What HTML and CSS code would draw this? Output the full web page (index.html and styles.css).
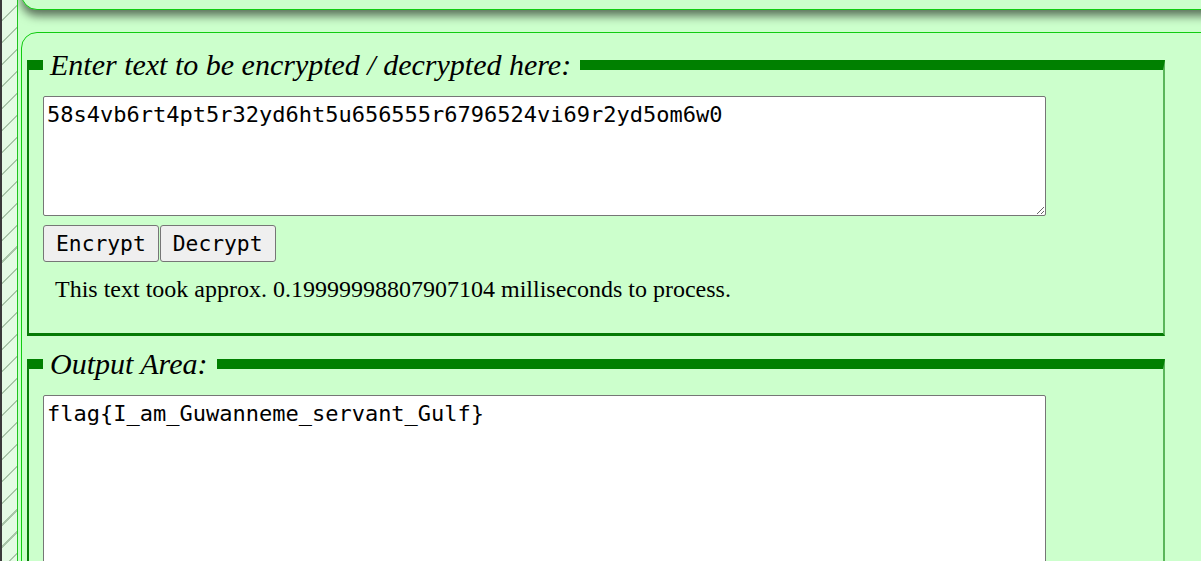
FILE: index.html
```html
<!DOCTYPE html>
<html>
<head>
<meta charset="utf-8">
<link rel="stylesheet" href="styles.css">
</head>
<body>
<div class="sidebar"></div>
<div class="main">
  <div class="topbox"></div>
  <div class="panel">
    <fieldset class="group">
      <legend class="group-title">Enter text to be encrypted / decrypted here:</legend>
      <textarea class="text-in">58s4vb6rt4pt5r32yd6ht5u656555r6796524vi69r2yd5om6w0</textarea>
      <div class="buttons">
        <button class="btn">Encrypt</button><button class="btn">Decrypt</button>
      </div>
      <p class="timing">This text took approx. 0.19999998807907104 milliseconds to process.</p>
    </fieldset>
    <fieldset class="group">
      <legend class="group-title">Output Area:</legend>
      <textarea class="text-out">flag{I_am_Guwanneme_servant_Gulf}</textarea>
    </fieldset>
  </div>
</div>
</body>
</html>
```
FILE: styles.css
```css
html, body {
  margin: 0;
  height: 100%;
  overflow: hidden;
}
body {
  background: #ccffcc;
  display: flex;
  font-family: "Liberation Serif", serif;
}
.sidebar {
  width: 15px;
  flex: none;
  border-left: 2px solid #3b3b3b;
  border-right: 1px solid #1fc41f;
  background-color: #e4fbe4;
  background-image: repeating-linear-gradient(135deg, transparent 0 14px, #a9c6a9 14px 15.5px);
}
.main {
  flex: 1;
  padding-left: 3px;
  min-width: 0;
  overflow: hidden;
}
.topbox {
  width: 1250px;
  height: 38px;
  margin-top: -30px;
  border: 1px solid #11cc11;
  border-radius: 16px;
  background: #ccffcc;
  box-shadow: 0 6px 10px rgba(0, 0, 0, 0.55);
  position: relative;
  z-index: 1;
}
.panel {
  width: 1250px;
  margin-top: 22px;
  border: 1px solid #11cc11;
  border-radius: 16px;
  background: #ccffcc;
  padding: 0 5px 40px;
  height: 600px;
}
.group {
  width: 1106px;
  margin: 15px 0 0;
  padding: 14px 14px 30px;
  border-top: 10px solid #008000;
  border-left: 2px solid #0a7d0a;
  border-right: 2px solid #5bb65b;
  border-bottom: 3px solid #047a04;
}
.group + .group {
  margin-top: 11px;
}
.group-title {
  font-style: italic;
  font-size: 30px;
  padding: 0 9px 0 7px;
  line-height: 34px;
  color: #000;
}
textarea {
  display: block;
  box-sizing: border-box;
  width: 1003px;
  margin: 0;
  padding: 5px 3px 3px;
  border: 1px solid #767676;
  border-radius: 2px;
  background: #fff;
  font-family: "DejaVu Sans Mono", monospace;
  font-size: 22px;
  color: #000;
  resize: both;
}
.text-in {
  height: 120px;
}
.text-out {
  height: 300px;
}
.buttons {
  display: flex;
  gap: 1px;
  margin-top: 9px;
}
.btn {
  height: 37px;
  padding: 0 12px;
  border: 1px solid #767676;
  border-radius: 3px;
  background: #efefef;
  font-family: "DejaVu Sans Mono", monospace;
  font-size: 21.3px;
  color: #000;
}
.timing {
  margin: 14px 0 0;
  padding-left: 12px;
  font-size: 24px;
  line-height: 27px;
  color: #000;
}
```
